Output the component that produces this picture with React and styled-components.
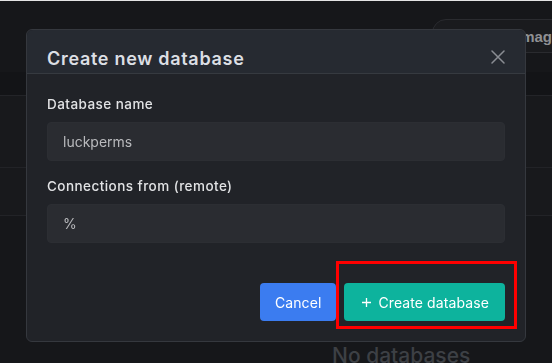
import React from "react";
import styled, { createGlobalStyle } from "styled-components";

const Global = createGlobalStyle`
  html, body { margin: 0; padding: 0; background: #16171a; overflow: hidden; height: 363px; }
  body { font-family: Inter, "Noto Sans", sans-serif; }
  * { box-sizing: border-box; }
`;

const Page = styled.div`
  width: 552px;
  display: flex;
  flex-direction: column;
  background: #16171a;
  overflow: hidden;
`;

const Strip = styled.div`
  flex: 0 0 1px;
  background: #e4e4e4;
`;

const TopBar = styled.div`
  flex: 0 0 71px;
  display: flex;
  justify-content: flex-start;
  align-items: flex-start;
  padding: 18px 0 0 432px;
`;

const GhostButton = styled.div`
  flex: 0 0 auto;
  width: 200px;
  height: 34px;
  border: 1px solid #2a2b2f;
  border-radius: 14px;
  background: #1a1b1e;
  display: flex;
  align-items: center;
  padding-left: 84px;
  font-family: "Liberation Sans", Arial, sans-serif;
  font-weight: 700;
  font-size: 15px;
  color: #8f9093;
  white-space: nowrap;
`;

const TableHead = styled.div`
  flex: 0 0 24px;
  background: #131417;
  border-bottom: 1px solid #232428;
`;

const TableRow = styled.div`
  flex: 0 0 ${(p) => p.$h}px;
  background: #18191c;
  border-bottom: 1px solid #222327;
`;

const Empty = styled.div`
  flex: 0 0 auto;
  padding: 128px 0 0 332px;
  font-size: 21px;
  color: #3d4045;
  line-height: 24px;
  font-weight: 500;
  white-space: nowrap;
`;

const Modal = styled.div`
  position: fixed;
  left: 26px;
  top: 29px;
  width: 500px;
  display: flex;
  flex-direction: column;
  background: #212328;
  border: 1px solid #35383e;
  border-radius: 6px;
`;

const Header = styled.div`
  display: flex;
  justify-content: space-between;
  align-items: flex-end;
  padding: 17px 20px 2px 20px;
  background: #262a31;
  border-bottom: 1px solid #363a40;
  border-radius: 6px 6px 0 0;
`;

const Title = styled.h2`
  margin: 0;
  font-size: 18px;
  line-height: 24px;
  font-weight: 600;
  color: #dcdfe4;
  letter-spacing: 0.7px;
`;

const Close = styled.button`
  border: 0;
  background: transparent;
  padding: 0;
  width: 14px;
  height: 14px;
  margin-bottom: 7px;
  display: flex;
  color: #8a8d93;
`;

const Body = styled.div`
  display: flex;
  flex-direction: column;
  padding: 20px;
`;

const Label = styled.label`
  font-size: 13.5px;
  line-height: 20px;
  font-weight: 500;
  color: #e2e3e5;
  margin-top: ${(p) => p.$mt || 0}px;
  letter-spacing: 0.45px;
`;

const Input = styled.div`
  margin-top: 8px;
  height: 39px;
  background: #2a2c31;
  border: 1px solid #2c2e33;
  border-radius: 4px;
  display: flex;
  align-items: center;
  padding-left: 15px;
  font-size: 14px;
  color: #b9babd;
`;

const Footer = styled.div`
  display: flex;
  justify-content: flex-end;
  gap: 8px;
  margin-top: 40px;
`;

const Button = styled.button`
  height: 38px;
  border: 0;
  border-radius: 4px;
  background: ${(p) => p.$bg};
  color: #ffffff;
  font-family: Inter, "Noto Sans", sans-serif;
  font-size: 14px;
  font-weight: 400;
  display: flex;
  align-items: center;
  gap: 7px;
  padding: ${(p) => p.$pad};
  letter-spacing: 0.1px;
`;

const Highlight = styled.div`
  position: relative;
  display: flex;
  &::after {
    content: "";
    position: absolute;
    left: -8px;
    right: -12px;
    top: -22px;
    bottom: -8px;
    border: 3px solid #ff0000;
    pointer-events: none;
  }
`;

export default function App() {
  return (
    <>
      <Global />
      <Page>
        <Strip />
        <TopBar>
          <GhostButton>Images</GhostButton>
        </TopBar>
        <TableHead />
        <TableRow $h={72} />
        <TableRow $h={48} />
        <Empty>No databases</Empty>
      </Page>
      <Modal>
        <Header>
          <Title>Create new database</Title>
          <Close aria-label="Close">
            <svg width="14" height="14" viewBox="0 0 14 14" fill="none" stroke="currentColor" strokeWidth="1.5" strokeLinecap="round">
              <path d="M1 1 L13 13 M13 1 L1 13" />
            </svg>
          </Close>
        </Header>
        <Body>
          <Label>Database name</Label>
          <Input>luckperms</Input>
          <Label $mt={15}>Connections from (remote)</Label>
          <Input>%</Input>
          <Footer>
            <Button $bg="#3b7cf0" $pad="0 15px">Cancel</Button>
            <Highlight>
              <Button $bg="#0db39d" $pad="0 16px 0 18px">
                <svg width="9" height="9" viewBox="0 0 9 9" stroke="currentColor" strokeWidth="1.3">
                  <path d="M4.5 0 V9 M0 4.5 H9" />
                </svg>
                Create database
              </Button>
            </Highlight>
          </Footer>
        </Body>
      </Modal>
    </>
  );
}
